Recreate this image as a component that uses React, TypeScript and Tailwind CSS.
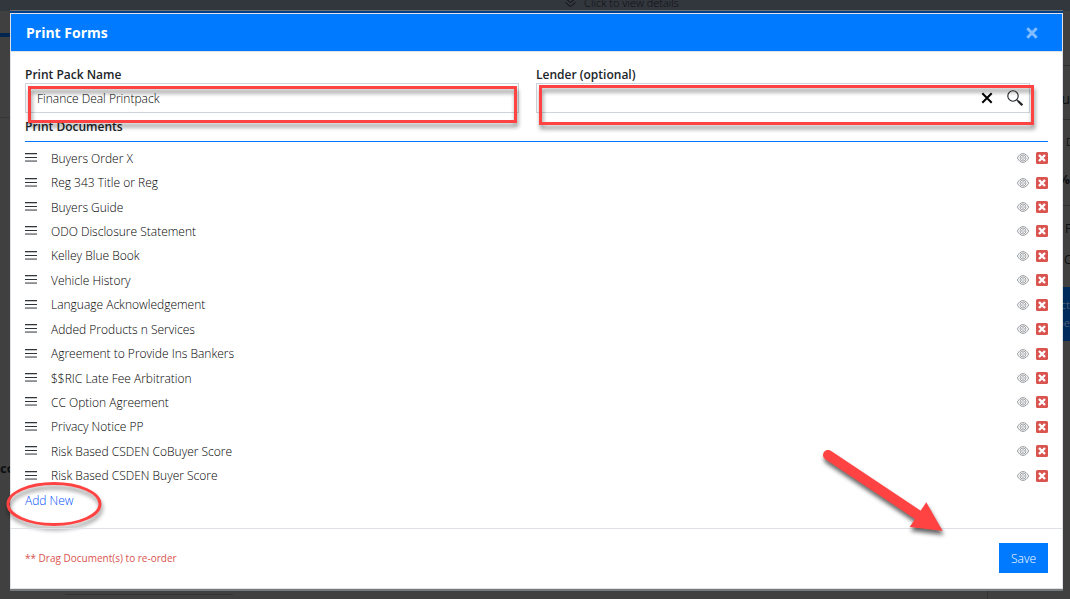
const documents = [
  "Buyers Order X",
  "Reg 343 Title or Reg",
  "Buyers Guide",
  "ODO Disclosure Statement",
  "Kelley Blue Book",
  "Vehicle History",
  "Language Acknowledgement",
  "Added Products n Services",
  "Agreement to Provide Ins Bankers",
  "$$RIC Late Fee Arbitration",
  "CC Option Agreement",
  "Privacy Notice PP",
  "Risk Based CSDEN CoBuyer Score",
  "Risk Based CSDEN Buyer Score",
];

function GripIcon() {
  return (
    <svg width="12" height="10" viewBox="0 0 12 10" shapeRendering="crispEdges" aria-hidden="true">
      <rect y="0" width="12" height="1" fill="#32373c" />
      <rect y="1" width="12" height="1" fill="#c4c6c8" />
      <rect y="4" width="12" height="1" fill="#2f3439" />
      <rect y="7" width="12" height="1" fill="#a0a2a5" />
      <rect y="8" width="12" height="1" fill="#8b8e91" />
    </svg>
  );
}

function EyeIcon() {
  return (
    <svg width="12" height="12" viewBox="0 0 12 12" fill="none" stroke="#7d8186" aria-hidden="true">
      <path d="M0.400 6C1.900 3 3.800 1.600 6 1.600S10.100 3 11.600 6C10.100 9 8.200 10.400 6 10.400S1.900 9 0.400 6z" strokeWidth="0.800" />
      <circle cx="6" cy="6" r="3" strokeWidth="0.700" />
      <circle cx="6" cy="6" r="1.400" strokeWidth="0.600" />
    </svg>
  );
}

function DeleteIcon() {
  return (
    <svg width="12" height="12" viewBox="0 0 12 12" aria-hidden="true">
      <rect width="12" height="12" rx="1.500" fill="#d9534f" />
      <path d="M3 3l6 6M9 3l-6 6" stroke="#fff" strokeWidth="2.400" />
    </svg>
  );
}

function CrossIcon({ className }: { className: string }) {
  return (
    <svg width="12" height="12" viewBox="0 0 12 12" fill="none" stroke="currentColor" className={className} aria-hidden="true">
      <path d="M1.300 1.300l9.400 9.400M10.700 1.300l-9.400 9.400" />
    </svg>
  );
}

function SearchIcon() {
  return (
    <svg width="16" height="16" viewBox="0 0 16 16" fill="none" stroke="#212529" aria-hidden="true">
      <circle cx="6" cy="6" r="5.200" strokeWidth="1.100" />
      <path d="M9.700 9.700l1.500 1.500" strokeWidth="1.200" />
      <path d="M11 11l4.300 4.200" strokeWidth="2.200" />
    </svg>
  );
}

// Dimmed page that shows around the edges of the dialog
function Backdrop() {
  return (
    <div className="absolute inset-0 flex flex-col overflow-hidden bg-[#404040] text-[#0d0f11]" aria-hidden="true">
      <div className="flex h-[11px] shrink-0 items-end justify-center bg-[#32363d] pl-[174px]">
        <div className="flex items-center gap-2">
          <svg width="11" height="11" viewBox="0 0 11 11" fill="none" stroke="currentColor">
            <path d="M0.500 1.500l5 4 5-4M0.500 5.500l5 4 5-4" />
          </svg>
          <span className="text-[11px]">Click to view details</span>
        </div>
      </div>
      <div className="flex flex-1 justify-between">
        <div className="flex w-[10px] flex-col overflow-hidden">
          <div className="mt-[22px] h-[4px] bg-[#00264f]" />
          <div className="h-[81px] border-b border-[#363636]" />
          <div className="mt-[341px] text-[13px] leading-[18px] font-bold">co</div>
        </div>
        <div className="flex w-[7px] flex-col overflow-hidden font-normal">
          <div className="h-[55px] border-b border-[#303030]" />
          <div className="flex h-[54px] items-center justify-end border-b border-[#303030] pt-[12px] text-[14px]">u</div>
          <div className="flex h-[86px] flex-col border-b border-[#303030] pt-[14px]">
            <span className="pl-[3px] text-[10px]">D</span>
            <span className="mt-[20px] flex justify-end text-[13px] font-bold">%</span>
          </div>
          <span className="mt-[14px] pl-[2px]">F</span>
          <span className="mt-[14px] pl-px">C</span>
          <div className="mt-[19px] flex h-[54px] flex-col items-end justify-center bg-[#002a5c] text-[11px] leading-[18px] text-[#4d5c70]">
            <span>ct</span>
            <span>pe</span>
          </div>
        </div>
      </div>
      <div className="flex h-[9px] pl-[65px]">
        <div className="mt-[4px] h-px w-[168px] bg-[#333333]" />
        <div className="mr-[82px] ml-auto w-px bg-[#333333]" />
      </div>
    </div>
  );
}

function Highlight({ className }: { className: string }) {
  return (
    <div
      className={`pointer-events-none absolute z-10 border-[3px] border-[#ff4343] drop-shadow-[1px_4px_2px_rgba(0,0,0,0.45)] ${className}`}
    />
  );
}

export default function App() {
  return (
    <div className="relative min-h-screen pt-[10px] pr-[7px] pb-[8px] pl-[10px] font-['Open_Sans','Noto_Sans',sans-serif] text-[12px] leading-[17px] font-light text-black">
      <Backdrop />
      <div
        role="dialog"
        aria-labelledby="dialog-title"
        className="relative border-t border-b-2 border-t-[#707070] border-b-[#777a7d] bg-white"
      >
        <div className="h-[2px] bg-[#00408a]" />
        <div className="border border-[#dee2e6]">
          <header className="flex h-[38px] items-center justify-between border-b border-[#dee2e6] bg-[#007bff] pr-[24px] pl-[15px]">
            <h1 id="dialog-title" className="text-[14px] leading-[20px] font-bold text-white">
              Print Forms
            </h1>
            <button type="button" aria-label="Close" className="text-[#80bdff]">
              <CrossIcon className="stroke-[3]" />
            </button>
          </header>

          <main className="px-[14px] pt-[14px]">
            <div className="grid grid-cols-2 gap-[17px] pr-[18px]">
              <div>
                <label htmlFor="pack-name" className="block font-semibold text-[#212529]">
                  Print Pack Name
                </label>
                <div className="relative">
                  <input
                    id="pack-name"
                    type="text"
                    defaultValue="Finance Deal Printpack"
                    className="block h-[30px] w-full border border-[#ced4da] px-[11px] outline-none"
                  />
                  <Highlight className="top-[3px] right-[2px] left-[3px] h-[37px]" />
                </div>
              </div>
              <div>
                <label htmlFor="lender" className="block font-semibold text-[#212529]">
                  Lender (optional)
                </label>
                <div className="relative">
                  <div className="flex h-[30px] items-center border border-[#ced4da] pr-[6px]">
                    <input id="lender" type="text" className="h-full min-w-0 flex-1 px-[11px] outline-none" />
                    <button type="button" aria-label="Clear lender" className="mr-[14px]">
                      <CrossIcon className="stroke-[2]" />
                    </button>
                    <button type="button" aria-label="Search lender">
                      <SearchIcon />
                    </button>
                  </div>
                  <Highlight className="top-[2px] right-[-4px] left-[3px] h-[40px]" />
                </div>
              </div>
            </div>

            <h2 className="mt-[5px] border-b border-[#007bff] pb-[6px] font-semibold text-[#212529]">Print Documents</h2>

            <ul className="mt-[4px] grid min-h-[342px] auto-rows-fr">
              {documents.map((name) => (
                <li key={name} className="flex items-center">
                  <GripIcon />
                  <span className="ml-[14px] flex-1">{name}</span>
                  <button type="button" aria-label={`Preview ${name}`} className="mr-[7px]">
                    <EyeIcon />
                  </button>
                  <button type="button" aria-label={`Delete ${name}`}>
                    <DeleteIcon />
                  </button>
                </li>
              ))}
            </ul>

            <div className="relative mt-[4px] w-fit">
              <a href="#" className="block text-[#0050ff]">
                Add New
              </a>
              <svg
                width="110"
                height="60"
                viewBox="0 0 110 60"
                className="pointer-events-none absolute top-[-18px] left-[-25px] max-w-none drop-shadow-[1px_4px_2px_rgba(0,0,0,0.45)]"
                aria-hidden="true"
              >
                <ellipse cx="54" cy="30" rx="46" ry="20.500" fill="none" stroke="#ff4343" strokeWidth="3" />
              </svg>
            </div>
          </main>

          <footer className="relative mt-[19px] flex items-center justify-between border-t border-[#dee2e6] px-[14px] pt-[14px] pb-[15px]">
            <p className="text-[10px] leading-[14px] font-normal text-[#d9534f]">** Drag Document(s) to re-order</p>
            <button type="button" className="h-[30px] bg-[#007bff] px-[12px] text-white">
              Save
            </button>
            <svg
              width="130"
              height="100"
              viewBox="818 444 130 100"
              className="pointer-events-none absolute top-[-85px] right-[114px] drop-shadow-[1px_4px_2px_rgba(0,0,0,0.6)]"
              aria-hidden="true"
            >
              <path d="M828 455L918 515" stroke="#ff4343" strokeWidth="10" strokeLinecap="round" />
              <path d="M926.300 502.300L942.700 531L909.700 527z" fill="#ff4343" />
            </svg>
          </footer>
        </div>
      </div>
    </div>
  );
}
